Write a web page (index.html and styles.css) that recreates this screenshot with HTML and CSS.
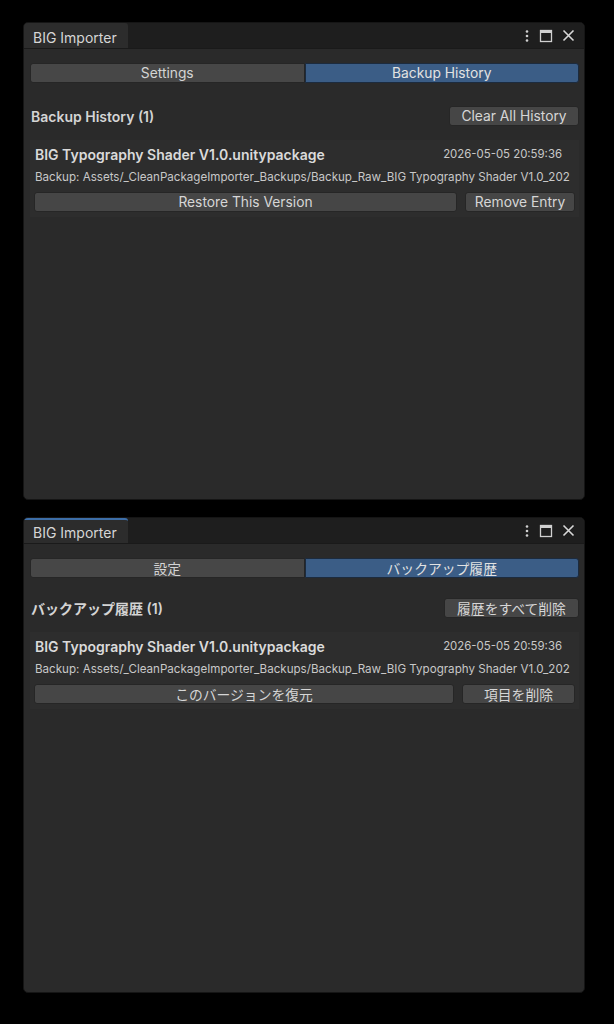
FILE: index.html
```
<!DOCTYPE html>
<html>
<head>
<meta charset="utf-8">
<link rel="stylesheet" href="styles.css">
</head>
<body>
<div class="stack">
  <div class="window w1">
    <div class="titlebar">
      <div class="tab">BIG Importer</div>
      <div class="ctrls">
        <svg class="ic" width="6" height="14" viewBox="0 0 6 14"><circle cx="3" cy="2.5" r="1.3" fill="#d0d0d0"/><circle cx="3" cy="7" r="1.3" fill="#d0d0d0"/><circle cx="3" cy="11.5" r="1.3" fill="#d0d0d0"/></svg>
        <svg class="ic" width="14" height="14" viewBox="0 0 14 14"><rect x="1.5" y="1.5" width="11" height="11" fill="none" stroke="#d0d0d0" stroke-width="1.3"/><rect x="1.5" y="1.5" width="11" height="2.5" fill="#d0d0d0"/></svg>
        <svg class="ic" width="13" height="13" viewBox="0 0 13 13"><path d="M1.5 1.5L11.5 11.5M11.5 1.5L1.5 11.5" stroke="#d8d8d8" stroke-width="1.6" fill="none"/></svg>
      </div>
    </div>
    <div class="content">
      <div class="toggle">
        <div class="seg">Settings</div>
        <div class="seg on">Backup History</div>
      </div>
      <div class="headrow">
        <div class="heading">Backup History (1)</div>
        <div class="btn clear">Clear All History</div>
      </div>
      <div class="entry">
        <div class="erow">
          <div class="ename">BIG Typography Shader V1.0.unitypackage</div>
          <div class="edate">2026-05-05 20:59:36</div>
        </div>
        <div class="epath">Backup: Assets/_CleanPackageImporter_Backups/Backup_Raw_BIG Typography Shader V1.0_202</div>
        <div class="eacts">
          <div class="btn restore">Restore This Version</div>
          <div class="btn remove">Remove Entry</div>
        </div>
      </div>
    </div>
  </div>

  <div class="window w2">
    <div class="titlebar">
      <div class="tab active">BIG Importer</div>
      <div class="ctrls">
        <svg class="ic" width="6" height="14" viewBox="0 0 6 14"><circle cx="3" cy="2.5" r="1.3" fill="#d0d0d0"/><circle cx="3" cy="7" r="1.3" fill="#d0d0d0"/><circle cx="3" cy="11.5" r="1.3" fill="#d0d0d0"/></svg>
        <svg class="ic" width="14" height="14" viewBox="0 0 14 14"><rect x="1.5" y="1.5" width="11" height="11" fill="none" stroke="#d0d0d0" stroke-width="1.3"/><rect x="1.5" y="1.5" width="11" height="2.5" fill="#d0d0d0"/></svg>
        <svg class="ic" width="13" height="13" viewBox="0 0 13 13"><path d="M1.5 1.5L11.5 11.5M11.5 1.5L1.5 11.5" stroke="#d8d8d8" stroke-width="1.6" fill="none"/></svg>
      </div>
    </div>
    <div class="content">
      <div class="toggle">
        <div class="seg">設定</div>
        <div class="seg on">バックアップ履歴</div>
      </div>
      <div class="headrow">
        <div class="heading">バックアップ履歴 (1)</div>
        <div class="btn clear">履歴をすべて削除</div>
      </div>
      <div class="entry">
        <div class="erow">
          <div class="ename">BIG Typography Shader V1.0.unitypackage</div>
          <div class="edate">2026-05-05 20:59:36</div>
        </div>
        <div class="epath">Backup: Assets/_CleanPackageImporter_Backups/Backup_Raw_BIG Typography Shader V1.0_202</div>
        <div class="eacts">
          <div class="btn restore">このバージョンを復元</div>
          <div class="btn remove">項目を削除</div>
        </div>
      </div>
    </div>
  </div>
</div>
</body>
</html>
```

FILE: styles.css
```
* { box-sizing: border-box; }
html, body { margin: 0; padding: 0; background: #000; }
body {
  font-family: Inter, "Noto Sans", "Noto Sans CJK JP", sans-serif;
  color: #d0d0d0;
  width: 614px;
  height: 1024px;
  overflow: hidden;
}
.stack {
  padding: 22px 0 0 23px;
  display: flex;
  flex-direction: column;
  gap: 17px;
}
.window {
  width: 562px;
  background: #2a2a2a;
  border: 1px solid #151515;
  border-radius: 5px;
  overflow: hidden;
  display: flex;
  flex-direction: column;
}
.w1 { height: 478px; }
.w2 { height: 476px; }
.titlebar {
  height: 26px;
  background: #1e1e1e;
  display: flex;
  align-items: stretch;
  justify-content: space-between;
  border-bottom: 1px solid #1a1a1a;
}
.tab {
  width: 104px;
  background: #2c2c2c;
  font-size: 14px;
  padding: 4px 0 0 9px;
  color: #d6d6d6;
  border-top: 2px solid transparent;
  border-top-right-radius: 3px;
}
.tab.active { border-top-color: #3d6ea8; }
.ctrls {
  display: flex;
  align-items: center;
  gap: 9px;
  padding-right: 9px;
}
.ic { display: block; }
.content {
  padding: 14px 5px 0 6px;
  display: flex;
  flex-direction: column;
}
.toggle {
  display: flex;
  height: 20px;
}
.seg {
  flex: 1;
  display: flex;
  align-items: center;
  justify-content: center;
  font-size: 13.8px;
  background: #474747;
  border: 1px solid #262626;
  color: #d4d4d4;
}
.seg:first-child { border-radius: 3px 0 0 3px; }
.seg.on {
  background: #3b5d86;
  border-color: #1c2b3e;
  border-radius: 0 3px 3px 0;
  color: #e2e2e2;
}
.headrow {
  margin-top: 23px;
  display: flex;
  align-items: center;
  justify-content: space-between;
  height: 20px;
  padding-left: 1px;
}
.heading {
  font-size: 14px;
  font-weight: 600;
  color: #d4d4d4;
}
.btn {
  background: #464646;
  border: 1px solid #262626;
  border-radius: 3px;
  height: 20px;
  display: flex;
  align-items: center;
  justify-content: center;
  font-size: 13.8px;
  color: #d6d6d6;
}
.btn.clear { width: 130px; }
.w2 .btn.clear { width: 135px; }
.entry {
  margin-top: 14px;
  background: #2d2d2d;
  padding: 4px 4px 5px 4px;
  display: flex;
  flex-direction: column;
}
.erow {
  height: 20px;
  display: flex;
  align-items: center;
  justify-content: space-between;
  padding: 0 13px 0 1px;
}
.ename {
  font-size: 14px;
  font-weight: 600;
  color: #dadada;
}
.edate {
  font-size: 11.4px;
  color: #c8c8c8;
}
.epath {
  margin-top: 3px;
  height: 20px;
  line-height: 20px;
  font-size: 11.6px;
  padding-left: 1px;
  white-space: nowrap;
  overflow: hidden;
  color: #c8c8c8;
}
.eacts {
  margin-top: 5px;
  display: flex;
  gap: 8px;
}
.restore { flex: 1; }
.remove { width: 110px; }
.w2 .remove { width: 113px; }
.w2 .headrow { margin-top: 20px; }
```
